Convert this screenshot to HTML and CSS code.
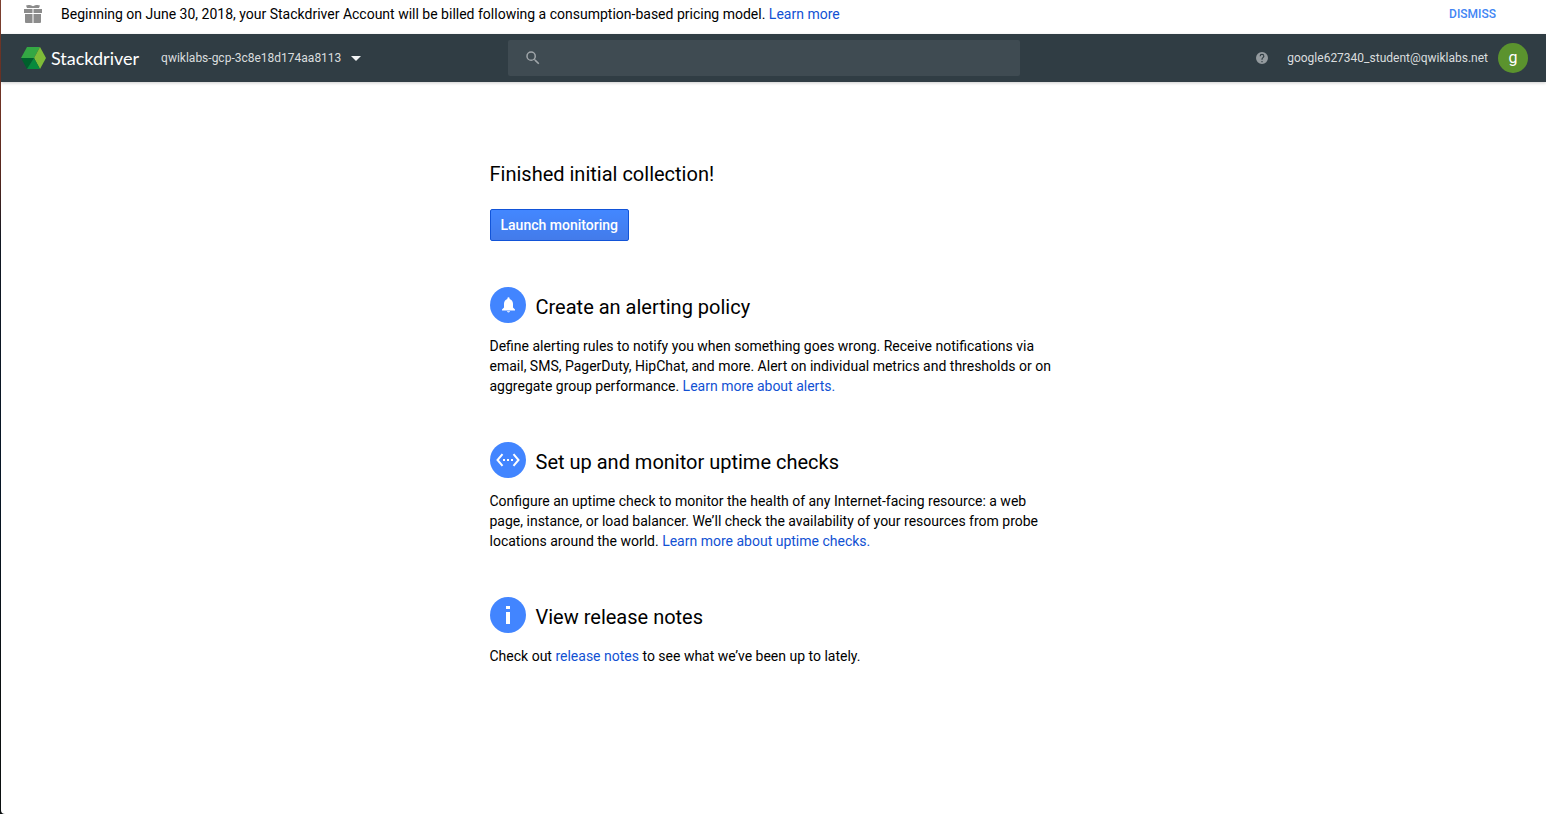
FILE: index.html
```html
<!DOCTYPE html>
<html lang="en">
<head>
<meta charset="utf-8">
<title>Stackdriver</title>
<link rel="stylesheet" href="styles.css">
</head>
<body>
<div class="window">
  <div class="notice">
    <svg class="notice-icon" width="20" height="24" viewBox="0 0 20 24" fill="#8c8c8c" aria-hidden="true">
      <path d="M3 5.500C5 4.500 8 5 10 6.300 12 5 15 4.500 17 5.500L16 8H4z"/>
      <path d="M1 9h8.500v4H1zM10.500 9H19v4h-8.500zM2 14h7.500v9H3a1 1 0 0 1-1-1zM10.500 14H18v8a1 1 0 0 1-1 1h-6.500z"/>
    </svg>
    <p class="notice-text">Beginning on June 30, 2018, your Stackdriver Account will be billed following a consumption-based pricing model. <a href="#pricing">Learn more</a></p>
    <button class="dismiss" type="button">DISMISS</button>
  </div>
  <header class="topbar">
    <div class="topbar-left">
      <a class="brand" href="#home">
        <svg width="25" height="22" viewBox="0 0 25 22" aria-hidden="true">
          <path fill="#34a844" d="M6 0h13l-6 11H0z"/>
          <path fill="#7fbc38" d="M19 0l6 11-6 11-6-11z"/>
          <path fill="#00602c" d="M0 11h13L6 22z"/>
          <path fill="#078a3d" d="M13 11l6 11H6z"/>
        </svg>
        <span class="brand-name">Stackdriver</span>
      </a>
      <button class="project" type="button">qwiklabs-gcp-3c8e18d174aa8113
        <svg width="10" height="5" viewBox="0 0 10 5" fill="#f1f3f4" aria-hidden="true"><path d="M0 0h10L5 5z"/></svg>
      </button>
    </div>
    <label class="search">
      <svg width="18" height="18" viewBox="0 0 24 24" fill="#a0a6aa" aria-hidden="true"><path d="M15.500 14h-.79l-.28-.27A6.470 6.470 0 0 0 16 9.500 6.500 6.500 0 1 0 9.500 16c1.610 0 3.090-.59 4.230-1.570l.27.28v.79l5 4.990L20.490 19l-4.990-5zm-6 0a4.500 4.500 0 1 1 0-9 4.500 4.500 0 0 1 0 9z"/></svg>
      <input type="text" aria-label="Search">
    </label>
    <div class="account">
      <svg width="12" height="12" viewBox="2 2 20 20" fill="#949b9f" role="img" aria-label="Help"><path d="M12 2a10 10 0 1 0 0 20 10 10 0 0 0 0-20zm1 17h-2v-2h2v2zm2.070-7.750l-.9.920C13.450 12.900 13 13.500 13 15h-2v-.5c0-1.100.45-2.100 1.170-2.830l1.240-1.260A2 2 0 1 0 10 9H8a4 4 0 1 1 8 0c0 .88-.36 1.680-.93 2.250z"/></svg>
      <span class="email">google627340_student@qwiklabs.net</span>
      <span class="avatar">g</span>
    </div>
  </header>
  <main class="content">
    <h1>Finished initial collection!</h1>
    <button class="launch" type="button">Launch monitoring</button>
    <section>
      <h2>
        <svg class="round" width="36" height="36" viewBox="0 0 36 36" fill="#fff" aria-hidden="true"><circle cx="18" cy="18" r="18" fill="#4285ff"/><path d="M18.500 25.500c.9 0 1.500-.6 1.500-1.200h-3c0 .6.6 1.200 1.500 1.200zM23 20.500v-3.700c0-2.500-1.300-4.300-3.400-4.900v-.6a1.100 1.100 0 0 0-2.200 0v.6c-2.100.6-3.400 2.400-3.400 4.900v3.700L12 22.500v1h13v-1z"/></svg>
        Create an alerting policy
      </h2>
      <p>Define alerting rules to notify you when something goes wrong. Receive notifications via email, SMS, PagerDuty, HipChat, and more. Alert on individual metrics and thresholds or on aggregate group performance. <a href="#alerts">Learn more about alerts.</a></p>
    </section>
    <section>
      <h2>
        <svg class="round" width="36" height="36" viewBox="0 0 36 36" fill="#fff" aria-hidden="true"><circle cx="18" cy="18" r="18" fill="#4285ff"/><path d="M12.500 12.200L7.500 18l5 5.800M23.500 12.200l5 5.800-5 5.800" fill="none" stroke="#fff" stroke-width="2"/><path d="M13 17h2v2h-2zM17 17h2v2h-2zM21 17h2v2h-2z"/></svg>
        Set up and monitor uptime checks
      </h2>
      <p>Configure an uptime check to monitor the health of any Internet-facing resource: a web page, instance, or load balancer. We’ll check the availability of your resources from probe locations around the world. <a href="#uptime">Learn more about uptime checks.</a></p>
    </section>
    <section>
      <h2>
        <svg class="round" width="36" height="36" viewBox="0 0 36 36" fill="#fff" aria-hidden="true"><circle cx="18" cy="18" r="18" fill="#4285ff"/><path d="M16 9h4v3h-4zM16 15h4v12h-4z"/></svg>
        View release notes
      </h2>
      <p>Check out <a href="#notes">release notes</a> to see what we’ve been up to lately.</p>
    </section>
  </main>
</div>
</body>
</html>
```
FILE: styles.css
```css
* { box-sizing: border-box; }
body {
  margin: 0;
  padding-left: 1px;
  background: linear-gradient(#7c4030 0, #6b3022 120px, #52251d 180px, #101722 240px, #061525 480px, #0b0f10 700px);
  font: 14px/20px Roboto, sans-serif;
  color: #000;
}
button { padding: 0; border: 0; background: none; font: inherit; }
a { color: #1151d3; text-decoration: none; }
svg { flex: none; display: block; }
.window { min-height: 100vh; background: #fff; border-bottom-left-radius: 4px; }
.notice {
  display: flex;
  align-items: flex-start;
  height: 34px;
  padding: 0 50px 0 22px;
}
.notice-text { flex: 1; margin: 0 0 0 18px; padding-top: 4px; }
.dismiss { padding-top: 4px; font-size: 12px; font-weight: 500; color: #4285f4; }
.topbar {
  display: grid;
  grid-template-columns: 487fr 512px 508fr;
  align-items: center;
  height: 48px;
  padding: 0 18px 0 20px;
  background: #303d44;
  box-shadow: 0 1px 3px rgba(0, 0, 0, .2);
}
.topbar-left, .brand, .project, .account { display: flex; align-items: center; }
.brand { gap: 5px; }
.brand-name { color: #fff; font-family: Lato, sans-serif; font-size: 18px; }
.topbar-left { gap: 22px; }
.project { gap: 10px; color: #dadddf; font-size: 12px; }
.search {
  display: flex;
  align-items: center;
  height: 36px;
  padding: 0 16px;
  gap: 12px;
  border-radius: 2px;
  background: #3f4b52;
}
.search input { flex: 1; border: 0; outline: 0; background: none; color: #fff; font: inherit; }
.account { justify-content: flex-end; }
.email { margin: 0 10px 0 19px; color: #dadddf; font-size: 12px; }
.avatar {
  width: 30px;
  border-radius: 50%;
  background: #5b932e;
  color: #fff;
  font-size: 16px;
  line-height: 30px;
  text-align: center;
}
.content { max-width: 568px; margin: 0 auto; padding-top: 80px; }
h1, h2 { margin: 0; font-size: 20px; font-weight: 400; line-height: 24px; }
.launch {
  height: 32px;
  margin: 23px 0 46px;
  padding: 0 10px;
  border: 1px solid #1254d8;
  border-radius: 2px;
  background: linear-gradient(#4387ff, #437bea);
  color: #fff;
  font-weight: 500;
}
section { margin-bottom: 46px; }
h2 { display: flex; align-items: flex-end; gap: 10px; line-height: 32px; }
section p { margin: 13px 0 0; }
```
